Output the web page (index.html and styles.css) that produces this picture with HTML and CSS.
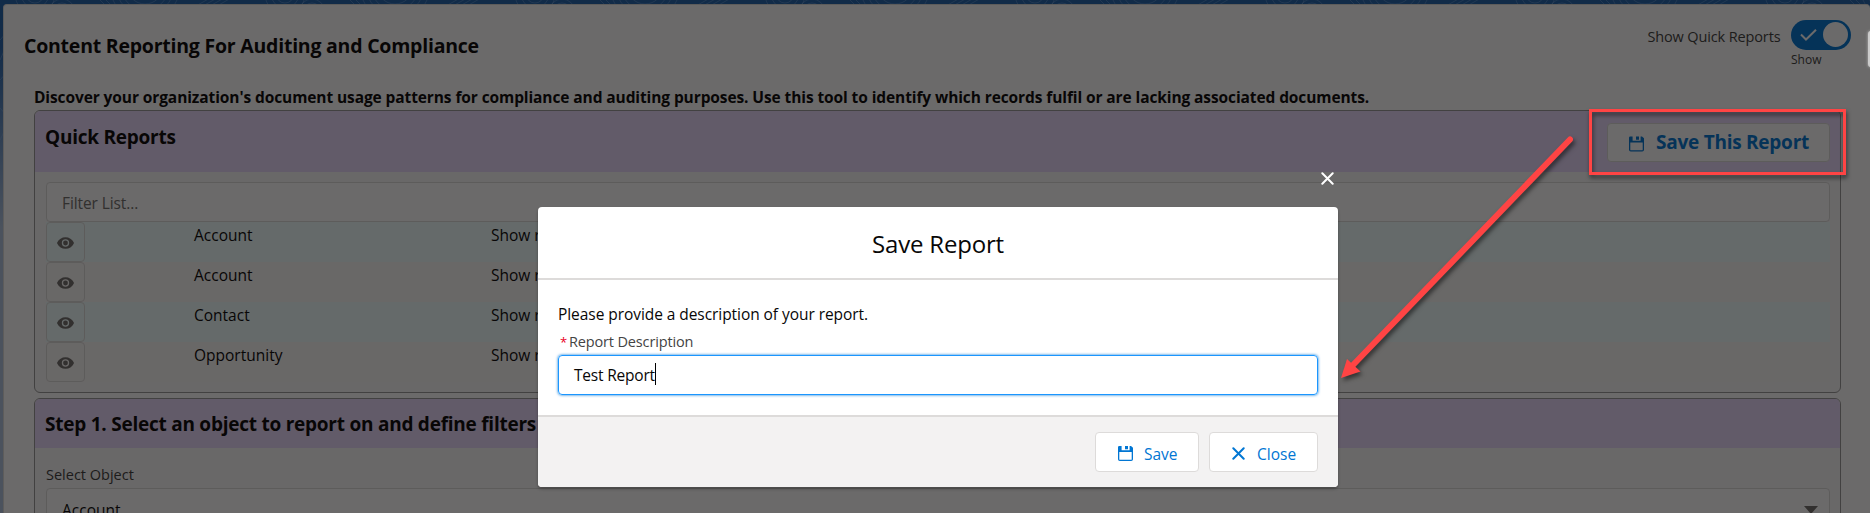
FILE: index.html
```html
<!DOCTYPE html>
<html lang="en">
<head>
<meta charset="utf-8">
<title>Content Reporting For Auditing and Compliance</title>
<link rel="stylesheet" href="styles.css">
</head>
<body>
<svg class="defs" width="0" height="0">
  <symbol id="save" viewBox="0 0 15 15">
    <path fill="currentColor" d="M1.200 0H3.600v4.200H11.600V0h1.400l2 1.800V6H0V1.200Q0 0 1.200 0zM7 0h3v3.200H7z"/>
    <path fill="none" stroke="currentColor" stroke-width="1.300" d="M.65 5v8.200q0 1.150 1.150 1.150h11.400q1.150 0 1.150-1.150V5"/>
  </symbol>
  <symbol id="cross" viewBox="0 0 13 13">
    <path fill="none" stroke="currentColor" stroke-width="2" stroke-linecap="round" d="M1.300 1.300l10.400 10.400M11.700 1.300L1.300 11.700"/>
  </symbol>
  <symbol id="eye" viewBox="0 0 17 12">
    <path fill="currentColor" fill-rule="evenodd" d="M.2 5.500C1.800 2.200 4.900.2 8.500.2s6.700 2 8.300 5.300q.2.500 0 1C15.200 9.800 12.100 11.800 8.500 11.800S1.800 9.800.2 6.500q-.2-.5 0-1zM8.500 2.300a3.700 3.700 0 1 0 0 7.400 3.700 3.700 0 0 0 0-7.400z"/>
    <circle cx="8.500" cy="6" r="2.400" fill="currentColor"/>
  </symbol>
</svg>

<div class="page">
  <svg class="waves" width="1870" height="513">
    <defs>
      <pattern id="topo" width="250" height="513" patternUnits="userSpaceOnUse">
        <g fill="none" stroke="#8fb8e6" stroke-opacity=".35" stroke-width="1">
          <circle cx="35" cy="-6" r="9"/><circle cx="35" cy="-6" r="14"/><circle cx="35" cy="-6" r="20"/>
          <circle cx="62" cy="12" r="9"/><circle cx="62" cy="12" r="13"/>
          <circle cx="145" cy="-14" r="18"/><circle cx="145" cy="-14" r="24"/><circle cx="145" cy="-14" r="29"/><circle cx="145" cy="-14" r="35"/>
          <path d="M196 6l14-8M203 6l14-8M210 6l14-8M217 6l14-8M100 0l7 7M106 0l7 7M0 40l8-9M0 60q5-8 6-20M0 80l8-9M0 108l8 9M0 140l7-14"/>
        </g>
      </pattern>
    </defs>
    <rect width="1870" height="513" fill="url(#topo)"/>
  </svg>
  <main class="card">
    <header class="card-head">
      <h1 class="title">Content Reporting For Auditing and Compliance</h1>
      <div class="toggle">
        <span class="toggle-label">Show Quick Reports</span>
        <div class="toggle-body">
          <div class="switch">
            <svg width="17" height="12" viewBox="0 0 17 12"><path fill="none" stroke="#fff" stroke-width="2" d="M1 5.500l5 5L16 .8"/></svg>
            <span class="knob"></span>
          </div>
          <span class="toggle-state">Show</span>
        </div>
      </div>
    </header>
    <p class="intro">Discover your organization's document usage patterns for compliance and auditing purposes. Use this tool to identify which records fulfil or are lacking associated documents.</p>

    <section class="panel">
      <div class="panel-head panel-head-tall">
        <h2 class="heading quick">Quick Reports</h2>
        <button class="save-main"><svg class="save-icon" width="15" height="16"><use href="#save"/></svg><span>Save This Report</span></button>
      </div>
      <div class="panel-body">
        <div class="field filter">Filter List...</div>
        <div class="row"><span class="eye"><svg width="17" height="12"><use href="#eye"/></svg></span><span class="object">Account</span><span class="desc">Show r</span></div>
        <div class="row"><span class="eye"><svg width="17" height="12"><use href="#eye"/></svg></span><span class="object">Account</span><span class="desc">Show r</span></div>
        <div class="row"><span class="eye"><svg width="17" height="12"><use href="#eye"/></svg></span><span class="object">Contact</span><span class="desc">Show r</span></div>
        <div class="row"><span class="eye"><svg width="17" height="12"><use href="#eye"/></svg></span><span class="object">Opportunity</span><span class="desc">Show r</span></div>
      </div>
    </section>

    <section class="panel panel-step">
      <div class="panel-head"><h2 class="heading step">Step 1. Select an object to report on and define filters</h2></div>
      <div class="step-body">
        <div class="label">Select Object</div>
        <div class="field select"><span>Account</span><span class="caret"></span></div>
      </div>
    </section>
  </main>
</div>

<div class="backdrop">
  <div class="dialog">
    <div class="dialog-close"><svg width="13" height="13"><use href="#cross"/></svg></div>
    <div class="modal">
      <div class="modal-head">Save Report</div>
      <div class="modal-body">
        <p class="prompt">Please provide a description of your report.</p>
        <div class="modal-label"><span class="req">*</span>Report Description</div>
        <div class="input"><span>Test Report</span><i class="cursor"></i></div>
      </div>
      <div class="modal-foot">
        <button class="btn btn-save"><svg width="15" height="15"><use href="#save"/></svg><span>Save</span></button>
        <button class="btn btn-close"><svg width="13" height="13"><use href="#cross"/></svg><span>Close</span></button>
      </div>
    </div>
  </div>
</div>

<div class="side-tab"></div>
<div class="callout"></div>
<svg class="arrow" width="1870" height="513">
  <path d="M1570 139.500L1353 365" stroke="#ff4444" stroke-width="6" stroke-linecap="round"/>
  <path d="M1341 378l6-19 13.500 12.500z" fill="#ff4444"/>
</svg>
</body>
</html>
```
FILE: styles.css
```css
* { box-sizing: border-box; }
body {
  margin: 0;
  width: 1870px;
  height: 513px;
  overflow: hidden;
  position: relative;
  font-family: "Open Sans", "Noto Sans", sans-serif;
  font-size: 15.5px;
  font-weight: 375;
  color: #080707;
}
h1, h2, p { margin: 0; }
button { font: inherit; background: #fff; border: 1px solid #dddbda; border-radius: 4px; color: #0176d3; }
svg { display: block; flex: none; }
.defs { position: absolute; }

.page {
  position: relative;
  height: 513px;
  padding: 4px 0 0 3px;
  overflow: hidden;
  background: linear-gradient(#1e62ab 0, #2362aa 45px, #b0c4df 230px);
}
.waves { position: absolute; inset: 0; }
.card {
  position: relative;
  height: 540px;
  background: #fff;
  border: 1px solid #dddbda;
  border-right: 0;
  border-radius: 4px 4px 0 0;
}
.card-head { display: flex; justify-content: space-between; height: 82px; padding: 0 19px 0 20px; }
.title { margin-top: 29px; font-size: 19.5px; line-height: 24px; font-weight: 700; letter-spacing: -.23px; }
.toggle { display: flex; gap: 10.500px; padding-top: 15px; }
.toggle-label { margin-top: 7px; font-size: 14.5px; line-height: 20px; letter-spacing: -.13px; color: #3e3e3c; }
.switch {
  display: flex; align-items: center; justify-content: space-between;
  width: 60px; height: 30px; padding: 0 3px 1px 9px;
  border-radius: 15px; background: #0176d3;
}
.knob { width: 25px; height: 25px; border-radius: 50%; background: #fff; }
.toggle-state { display: block; margin-top: 2px; font-size: 12px; line-height: 16px; color: #3e3e3c; }

.intro { padding-left: 30px; font-size: 15.5px; line-height: 20px; font-weight: 700; letter-spacing: -.1px; white-space: nowrap; }
.panel { margin: 3px 29px 0 30px; border: 1px solid #999; border-radius: 6px; background: #f9f9f9; overflow: hidden; height: 283px; }
.panel-step { margin-top: 5px; height: 200px; }
.panel-head { display: flex; justify-content: space-between; align-items: center; height: 49px; padding: 0 11px 0 10px; background: #e9dafc; }
.panel-head-tall { height: 61px; align-items: flex-start; }
.heading { font-size: 19px; line-height: 24px; font-weight: 700; letter-spacing: -.24px; white-space: nowrap; }
.quick { margin-top: 14px; }
.save-main {
  display: flex; align-items: center; gap: 12px;
  width: 223px; height: 39px; margin: 12px -1px 0 0; padding: 0 0 1px 21px;
  font-size: 19px; font-weight: 700; letter-spacing: -.25px; white-space: nowrap;
}
.save-icon { margin-top: 3px; }
.panel-body { padding: 10px 10px 0 11px; }
.field { display: flex; align-items: center; height: 40px; padding: 0 15px; border: 1px solid #dddbda; border-radius: 4px; background: #fff; }
.filter { color: #706e6b; letter-spacing: -.1px; padding-top: 1px; }
.row { display: flex; height: 40px; background: #fbf9f8; }
.row:nth-child(even) { background: azure; }
.eye { display: flex; align-items: center; justify-content: center; width: 39px; height: 40px; padding-top: 1px; border: 1px solid #dddbda; border-radius: 4px; color: #706e6b; }
.object, .desc { padding-top: 1px; line-height: 24px; }
.object { width: 297px; margin-left: 109px; }
.step-body { padding: 17px 10px 0 11px; }
.label { font-size: 14.5px; line-height: 20px; margin-bottom: 3px; color: #3e3e3c; }
.select { justify-content: space-between; padding: 2px 11px 0 15px; height: 42px; }
.caret { width: 14px; height: 8px; background: #706e6b; clip-path: polygon(0 0, 100% 0, 50% 100%); }

.backdrop { position: absolute; inset: 0; background: rgba(8, 7, 7, .6); }
.dialog { width: 800px; margin: 172px 0 0 538px; }
.dialog-close { display: flex; justify-content: flex-end; height: 35px; padding-right: 4px; color: #fff; }
.modal { height: 280px; border-radius: 4px; overflow: hidden; background: #fff; box-shadow: 0 2px 3px rgba(0, 0, 0, .3); }
.modal-head { height: 73px; padding-top: 20px; border-bottom: 2px solid #dddbda; text-align: center; font-size: 24px; line-height: 33px; letter-spacing: -.2px; }
.modal-body { height: 135px; padding: 22px 20px 0; }
.prompt { line-height: 24px; letter-spacing: -.06px; }
.modal-label { display: flex; gap: 4px; margin: 6px 0 3px 2px; font-size: 14.5px; line-height: 20px; letter-spacing: -.15px; color: #444; }
.req { color: #ea001e; width: 5px; font-size: 13px; }
.input {
  display: flex; align-items: center; height: 40px; padding-left: 15px;
  border: 1px solid #1b96ff; border-radius: 4px; box-shadow: 0 0 3px #0176d3; letter-spacing: -.2px;
}
.cursor { width: 1px; height: 22px; margin-top: -3px; background: #000; }
.modal-foot { display: flex; justify-content: flex-end; gap: 10px; height: 72px; padding: 15px 20px 0; border-top: 2px solid #dddbda; background: #f3f2f2; }
.btn { display: flex; align-items: center; height: 40px; padding: 3px 0 0 22px; }
.btn-save { width: 104px; gap: 11px; }
.btn-close { width: 109px; gap: 12px; }

.side-tab { position: absolute; left: 1868px; top: 31px; width: 10px; height: 36px; border-radius: 3px; background: #ccc; box-shadow: 0 0 3px #bbb; }
.callout { position: absolute; left: 1589px; top: 109px; width: 257px; height: 66px; border: 3px solid #ff4444; filter: drop-shadow(1px 3px 2px rgba(0, 0, 0, .55)); }
.arrow { position: absolute; inset: 0; filter: drop-shadow(2px 3px 2px rgba(0, 0, 0, .5)); }
```
